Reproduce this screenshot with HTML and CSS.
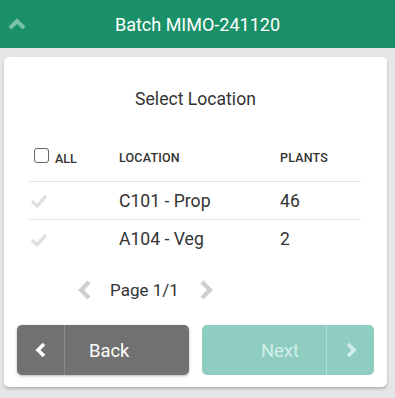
FILE: index.html
```html
<!DOCTYPE html>
<html>
<head>
<meta charset="utf-8">
<link rel="stylesheet" href="styles.css">
</head>
<body>
<header class="topbar">
  <svg class="collapse" width="18" height="12" viewBox="0 0 18 12"><path d="M2 10 L9 3 L16 10" fill="none" stroke="currentColor" stroke-width="4" stroke-linejoin="miter"/></svg>
  <h1 class="title">Batch MIMO-241120</h1>
</header>
<main class="card">
  <h2 class="heading">Select Location</h2>
  <div class="table">
    <div class="row head">
      <label class="all"><span class="box"></span><span class="all-label">ALL</span></label>
      <span class="th">LOCATION</span>
      <span class="th">PLANTS</span>
    </div>
    <div class="row">
      <svg class="check" width="18" height="15" viewBox="0 0 18 15"><path d="M2 8 L7 13 L16 3" fill="none" stroke="currentColor" stroke-width="3.4"/></svg>
      <span class="td">C101 - Prop</span>
      <span class="td">46</span>
    </div>
    <div class="row last">
      <svg class="check" width="18" height="15" viewBox="0 0 18 15"><path d="M2 8 L7 13 L16 3" fill="none" stroke="currentColor" stroke-width="3.4"/></svg>
      <span class="td">A104 - Veg</span>
      <span class="td">2</span>
    </div>
  </div>
  <div class="pager">
    <svg class="pg-arrow" width="14" height="20" viewBox="0 0 14 20"><path d="M11 2 L3 10 L11 18" fill="none" stroke="currentColor" stroke-width="4.4"/></svg>
    <span class="pg-text">Page 1/1</span>
    <svg class="pg-arrow" width="14" height="20" viewBox="0 0 14 20"><path d="M3 2 L11 10 L3 18" fill="none" stroke="currentColor" stroke-width="4.4"/></svg>
  </div>
  <div class="actions">
    <button class="btn back">
      <span class="btn-icon"><svg width="12" height="16" viewBox="0 0 12 16"><path d="M9 2 L3 8 L9 14" fill="none" stroke="currentColor" stroke-width="3.6"/></svg></span>
      <span class="btn-label">Back</span>
    </button>
    <button class="btn next">
      <span class="btn-label">Next</span>
      <span class="btn-icon"><svg width="12" height="16" viewBox="0 0 12 16"><path d="M3 2 L9 8 L3 14" fill="none" stroke="currentColor" stroke-width="3.6"/></svg></span>
    </button>
  </div>
</main>
</body>
</html>
```
FILE: styles.css
```css
* { box-sizing: border-box; }
html, body { margin: 0; padding: 0; }
body {
  background: #e6e6e6;
  font-family: Roboto, "Liberation Sans", sans-serif;
  color: #333;
  width: 395px;
  height: 398px;
  overflow: hidden;
}
.topbar {
  height: 48px;
  background: #1a9068;
  display: flex;
  align-items: center;
  justify-content: center;
  position: relative;
}
.collapse {
  position: absolute;
  left: 8px;
  top: 18px;
  color: #79c2a6;
}
.title {
  margin: 0;
  font-size: 18px;
  font-weight: 400;
  color: #fff;
}
.card {
  margin: 9px 8px 0 4px;
  background: #fff;
  border-radius: 5px;
  box-shadow: 0 2px 3px rgba(0,0,0,0.22);
  padding: 32px 13px 12px 13px;
  height: 330px;
}
.heading {
  margin: 0;
  text-align: center;
  font-size: 17.6px;
  font-weight: 400;
  line-height: 20px;
  color: #333;
}
.table {
  margin: 31px 13px 0 12px;
}
.row {
  display: grid;
  grid-template-columns: 90px 161px 1fr;
  align-items: center;
  height: 38px;
  border-bottom: 1px solid #e2e2e2;
}
.row.last { border-bottom: none; }
.row.head {
  height: 42px;
  align-items: start;
  padding-top: 8px;
}
.all {
  display: flex;
  align-items: flex-end;
  padding-left: 5px;
}
.box {
  width: 15px;
  height: 15px;
  border: 1px solid #666;
  border-radius: 3px;
  background: #fff;
}
.all-label {
  font-size: 12.5px;
  font-weight: 500;
  color: #333;
  margin-left: 6px;
  line-height: 12px;
  margin-bottom: -2px;
}
.th {
  font-size: 12.5px;
  font-weight: 500;
  color: #333;
  letter-spacing: 0.2px;
  line-height: 14px;
  margin-top: 3px;
}
.td {
  font-size: 17.6px;
  color: #333;
}
.check {
  color: #e0e0e0;
  margin-left: 1px;
}
.pager {
  display: flex;
  align-items: center;
  height: 24px;
  margin: 20px 0 0 61px;
}
.pg-arrow { color: #cfcfcf; }
.pg-text {
  font-size: 17px;
  color: #333;
  margin: 0 20px 0 18px;
}
.actions {
  display: flex;
  gap: 13px;
  margin-top: 23px;
}
.btn {
  flex: 0 0 172px;
  height: 50px;
  border: none;
  border-radius: 5px;
  padding: 0;
  display: flex;
  align-items: stretch;
  font-family: Roboto, "Liberation Sans", sans-serif;
  font-size: 18.4px;
}
.btn-icon {
  width: 48px;
  display: flex;
  align-items: center;
  justify-content: center;
}
.btn-label {
  flex: 1;
  display: flex;
  align-items: center;
}
.back {
  background: #717171;
  color: #fff;
  box-shadow: 0 1px 3px rgba(0,0,0,0.3);
}
.back .btn-icon { border-right: 1px solid #8a8a8a; }
.back .btn-label { padding-left: 24px; }
.next {
  background: #8fcdc2;
  color: #d3ede8;
}
.next .btn-icon { border-left: 1px solid #b2ddd5; }
.next .btn-label { justify-content: flex-end; padding-right: 27px; }
```
